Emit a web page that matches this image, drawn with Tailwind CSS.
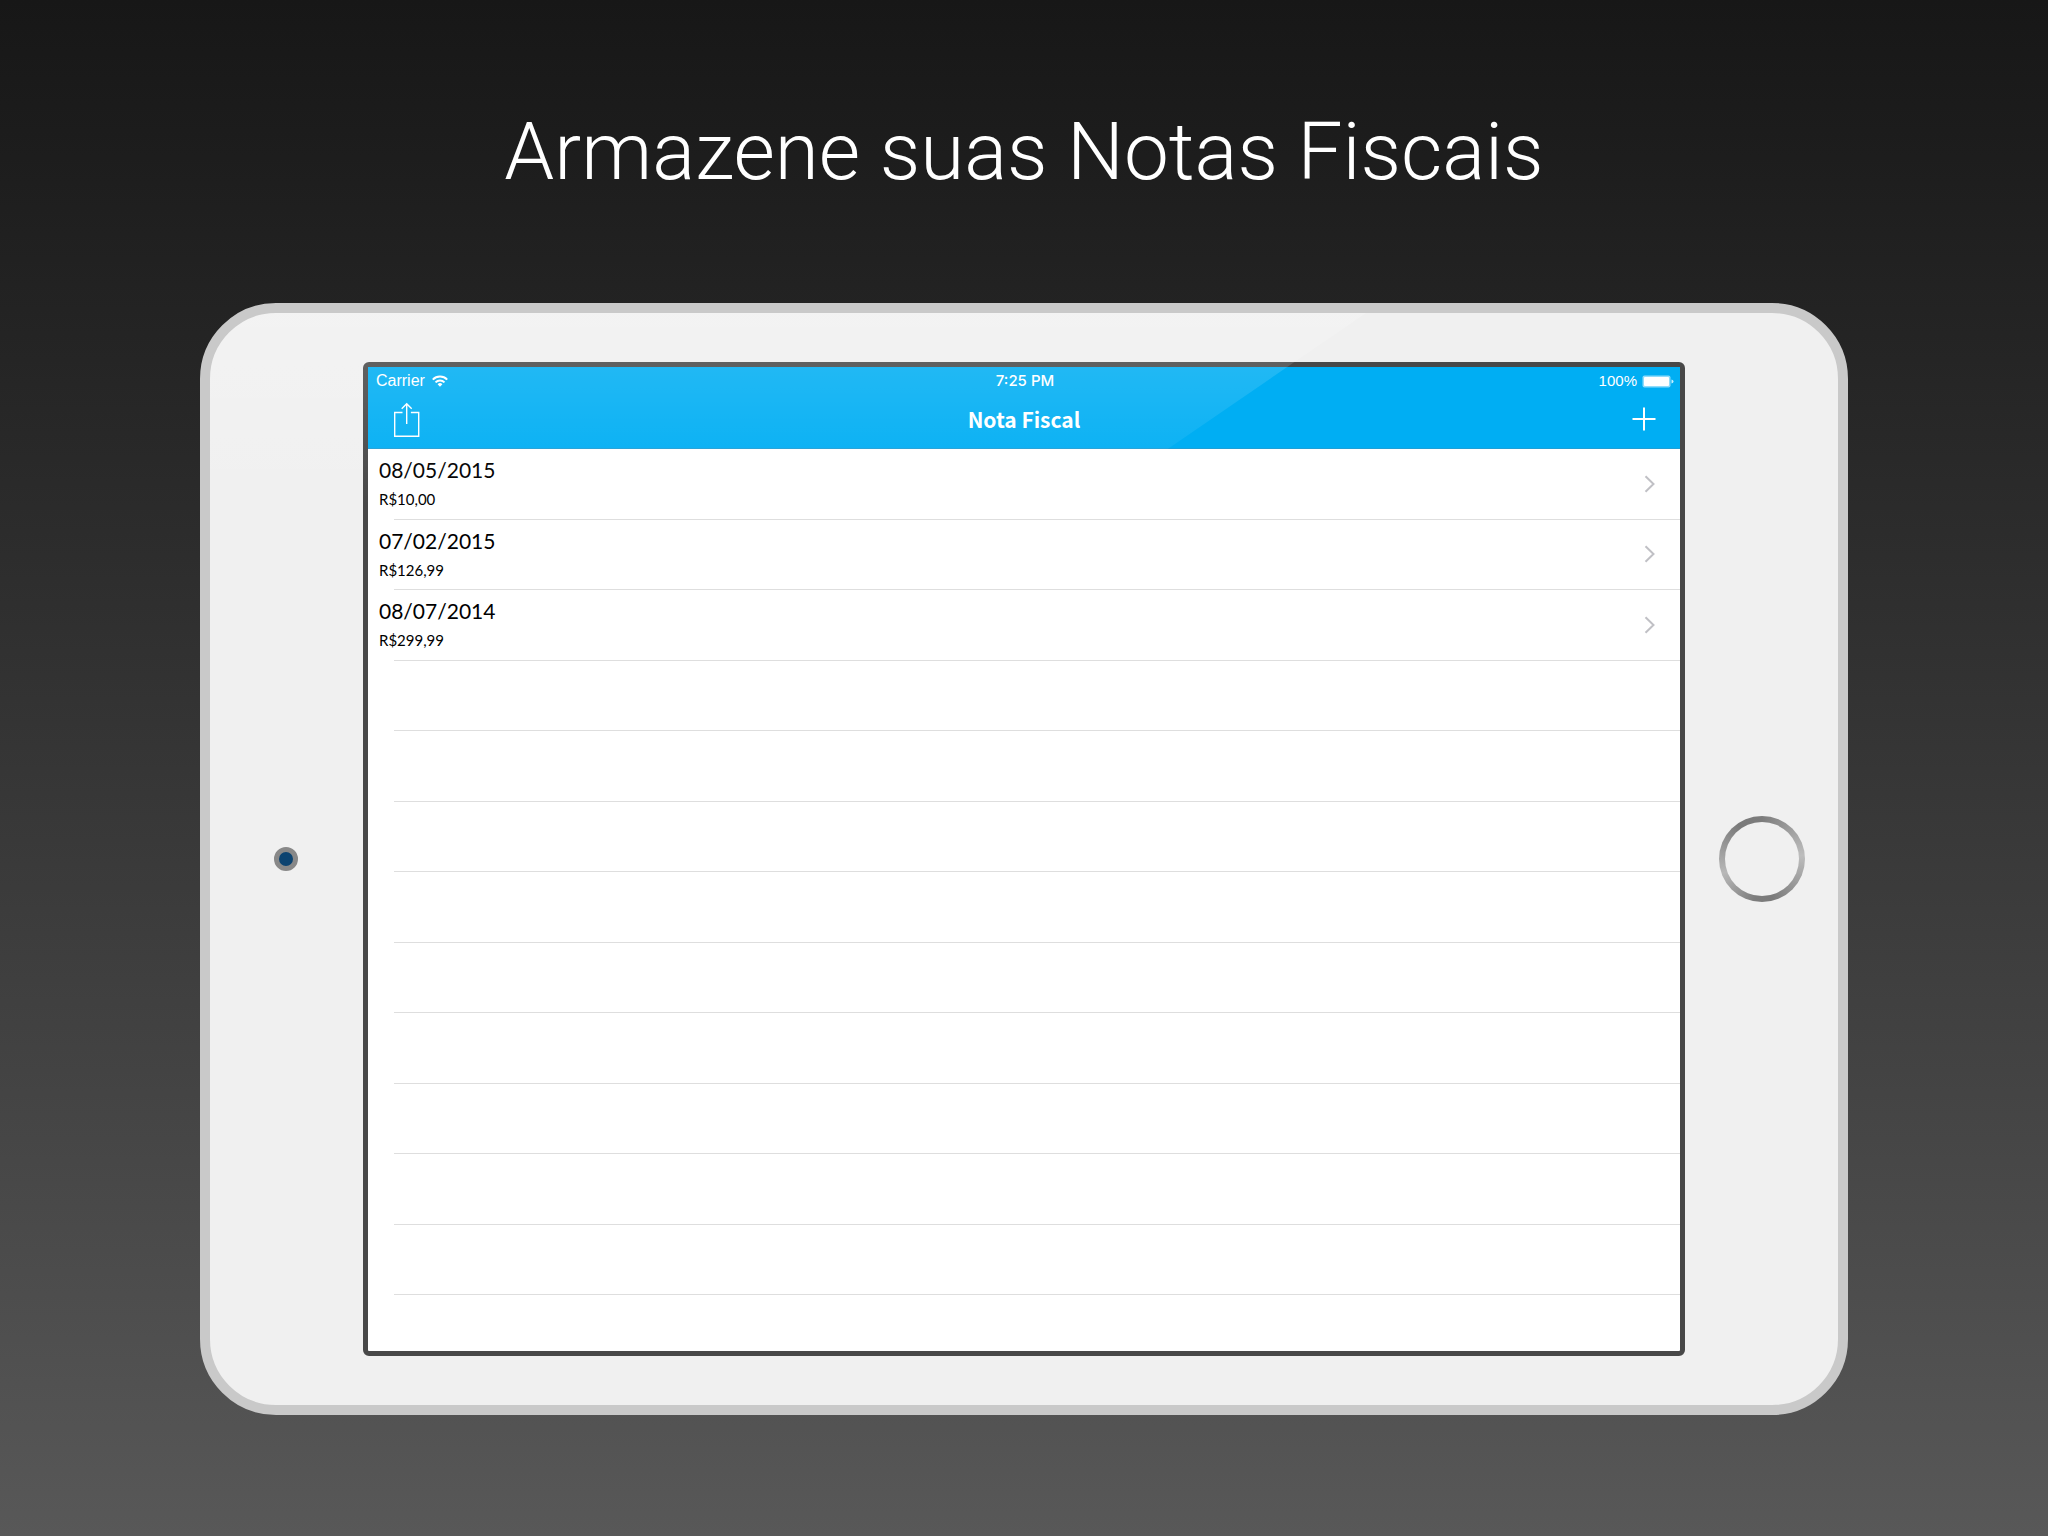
<!DOCTYPE html>
<html lang="pt-BR">
<head>
<meta charset="utf-8">
<meta name="viewport" content="width=device-width, initial-scale=1">
<title>Notas Fiscais</title>
<script src="https://cdn.jsdelivr.net/npm/@tailwindcss/browser@4"></script>
</head>
<body>
<main class="flex min-h-screen flex-col bg-linear-to-b from-[#171717] from-0% to-[#585858] to-100% px-[200px] pb-[121px]">
  <h1 class="flex h-[303px] items-center justify-center text-center font-['Roboto',sans-serif] text-[80px] leading-[88px] font-light text-white">Armazene suas Notas Fiscais</h1>

  <section class="relative grid grid-cols-[152px_minmax(0,1fr)_153px] items-center rounded-[76px] border-10 border-[#c9c9c9] bg-[#f0f0f0] py-[49px]">
    <!-- camera -->
    <div class="size-6 justify-self-center rounded-full border-5 border-[#888888] bg-[#0c4370]"></div>

    <div class="ml-px rounded-[6px] border-5 border-[#484848] bg-white">
      <header class="border-b border-[#1f9fd6] bg-[#00aef3] text-white">
        <div class="grid h-7 grid-cols-3 items-center pr-[6px] pl-2">
          <div class="flex items-center gap-[7px]">
            <span class="font-['Liberation_Sans',sans-serif] text-[16px] leading-5">Carrier</span>
            <svg class="h-3 w-4" viewBox="0 0 16 12" fill="none" stroke="currentColor" stroke-width="2"><path d="M.8 4.6a10.2 10.2 0 0 1 14.4 0M3.5 7.4a6.4 6.4 0 0 1 9 0"/><path d="M8 11.8 5.6 9.3a3.4 3.4 0 0 1 4.8 0z" fill="currentColor" stroke="none"/></svg>
          </div>
          <span class="text-center font-['Inter',sans-serif] text-[15px] leading-5 font-medium">7:25 PM</span>
          <div class="flex items-center justify-end gap-[5px]">
            <span class="font-['Liberation_Sans',sans-serif] text-[15px] leading-5">100%</span>
            <svg class="h-[13px] w-8" viewBox="0 0 32 13"><rect x=".5" y=".5" width="28" height="12" rx="2" fill="#8fdcfb"/><rect x="2" y="2" width="25" height="9" rx="1" fill="#fff"/><path d="M29.5 4.5q2 .5 2 2t-2 2z" fill="#c9effd"/></svg>
          </div>
        </div>
        <div class="grid h-[53px] grid-cols-3 items-center px-6 pb-[6px]">
          <button type="button" aria-label="Compartilhar" class="justify-self-start">
            <svg class="h-9 w-7" viewBox="0 0 28 36" fill="none" stroke="currentColor" stroke-width="1.4"><path d="M10.5 11.5H2.7v23.8h24V11.5h-7.8M14.7 23V3M9.7 7.8l5-5 5 5"/></svg>
          </button>
          <h2 class="text-center font-['Noto_Sans_CJK_JP',sans-serif] text-[21px] leading-8 font-bold">Nota Fiscal</h2>
          <button type="button" aria-label="Adicionar" class="justify-self-end">
            <svg class="size-6" viewBox="0 0 24 24" fill="none" stroke="currentColor" stroke-width="2"><path d="M12 .5v23M.5 12h23"/></svg>
          </button>
        </div>
      </header>

      <ul class="grid h-[846px] grid-rows-12 font-['Lato',sans-serif] text-black">
        <li>
          <a href="#" class="flex h-full items-center justify-between pr-[25px] pb-px pl-[11px]">
            <span class="flex flex-col gap-[3px]"><span class="text-[21px] leading-7">08/05/2015</span><span class="text-[15px] leading-6">R$10,00</span></span>
            <svg class="h-[18px] w-[11px]" viewBox="0 0 11 18" fill="none" stroke="#c0c0c5" stroke-width="2"><path d="m1.5 1.2 8 7.8-8 7.8"/></svg>
          </a>
          <hr class="-mt-px ml-[26px] border-[#dedede]">
        </li>
        <li>
          <a href="#" class="flex h-full items-center justify-between pr-[25px] pb-px pl-[11px]">
            <span class="flex flex-col gap-[3px]"><span class="text-[21px] leading-7">07/02/2015</span><span class="text-[15px] leading-6">R$126,99</span></span>
            <svg class="h-[18px] w-[11px]" viewBox="0 0 11 18" fill="none" stroke="#c0c0c5" stroke-width="2"><path d="m1.5 1.2 8 7.8-8 7.8"/></svg>
          </a>
          <hr class="-mt-px ml-[26px] border-[#dedede]">
        </li>
        <li>
          <a href="#" class="flex h-full items-center justify-between pr-[25px] pb-px pl-[11px]">
            <span class="flex flex-col gap-[3px]"><span class="text-[21px] leading-7">08/07/2014</span><span class="text-[15px] leading-6">R$299,99</span></span>
            <svg class="h-[18px] w-[11px]" viewBox="0 0 11 18" fill="none" stroke="#c0c0c5" stroke-width="2"><path d="m1.5 1.2 8 7.8-8 7.8"/></svg>
          </a>
          <hr class="-mt-px ml-[26px] border-[#dedede]">
        </li>
        <li class="ml-[26px] border-b border-[#dedede]"></li>
        <li class="ml-[26px] border-b border-[#dedede]"></li>
        <li class="ml-[26px] border-b border-[#dedede]"></li>
        <li class="ml-[26px] border-b border-[#dedede]"></li>
        <li class="ml-[26px] border-b border-[#dedede]"></li>
        <li class="ml-[26px] border-b border-[#dedede]"></li>
        <li class="ml-[26px] border-b border-[#dedede]"></li>
        <li class="ml-[26px] border-b border-[#dedede]"></li>
        <li class="ml-[26px] border-b border-[#dedede]"></li>
      </ul>
      <div class="h-14"></div>
    </div>

    <!-- home button -->
    <button type="button" aria-label="Início" class="grid size-[86px] place-items-center justify-self-center rounded-full bg-[conic-gradient(#7c7c7c_0deg,#bdbdbd_85deg,#7a7a7a_165deg,#7c7c7c_190deg,#b8b8b8_250deg,#7a7a7a_325deg,#7c7c7c_360deg)]">
      <span class="size-[74px] rounded-full bg-[#f0f0f0]"></span>
    </button>

    <!-- glass reflection -->
    <div class="pointer-events-none absolute top-0 left-0 h-[192px] w-[1156px] rounded-tl-[66px] bg-linear-to-b from-white/18 to-white/0 [clip-path:polygon(0_0,100%_0,876px_100%,0_100%)]"></div>
  </section>
</main>
</body>
</html>
